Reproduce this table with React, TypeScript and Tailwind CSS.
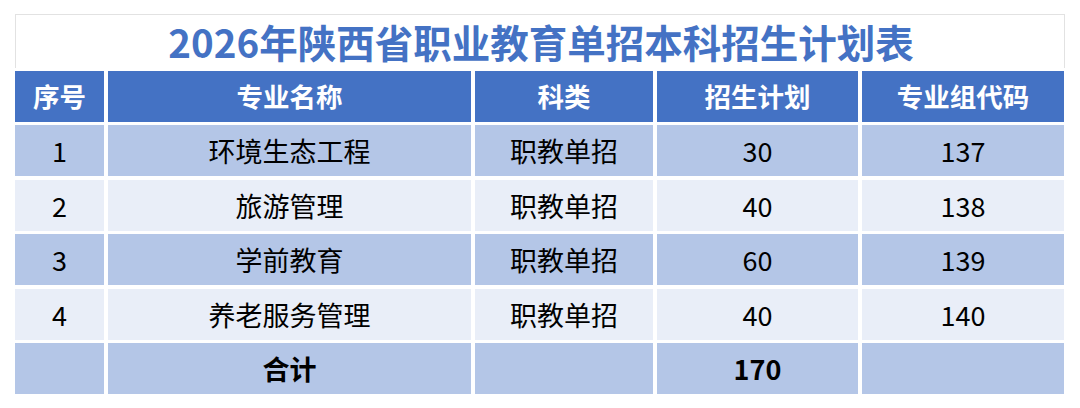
const rows = [
  { no: '1', name: '环境生态工程', type: '职教单招', plan: '30', code: '137' },
  { no: '2', name: '旅游管理', type: '职教单招', plan: '40', code: '138' },
  { no: '3', name: '学前教育', type: '职教单招', plan: '60', code: '139' },
  { no: '4', name: '养老服务管理', type: '职教单招', plan: '40', code: '140' },
]

const headers = ['序号', '专业名称', '科类', '招生计划', '专业组代码']

export default function App() {
  return (
    <div
      className="w-[1080px] h-[408px] bg-white pt-[14px] pl-[15px]"
      style={{ fontFamily: '"Noto Sans CJK SC", "Noto Sans", sans-serif' }}
    >
      {/* Title */}
      <div className="w-[1050px] h-[54px] border-t border-l border-r border-[#e2e2e2] flex items-center justify-center">
        <h1 className="text-[38.5px] font-bold text-[#4472c4] leading-none pl-[2px] -mt-[1px]">
          2026年陕西省职业教育单招本科招生计划表
        </h1>
      </div>

      {/* Table */}
      <div className="mt-[3px] grid grid-cols-[89px_363px_178px_201px_202px] gap-x-[4px] gap-y-[3.4px] auto-rows-[51px] text-[27px] leading-none">
        {headers.map((h) => (
          <div key={h} className="bg-[#4472c4] text-white font-bold text-[26.5px] flex items-center justify-center">
            {h}
          </div>
        ))}

        {rows.map((r, i) => {
          const bg = i % 2 === 0 ? 'bg-[#b4c6e7]' : 'bg-[#e9eef8]'
          return [r.no, r.name, r.type, r.plan, r.code].map((v, j) => (
            <div key={`${i}-${j}`} className={`${bg} text-black flex items-center justify-center`}>
              {v}
            </div>
          ))
        })}

        {/* Total */}
        <div className="bg-[#b4c6e7]" />
        <div className="bg-[#b4c6e7] text-black font-bold flex items-center justify-center">合计</div>
        <div className="bg-[#b4c6e7]" />
        <div className="bg-[#b4c6e7] text-black font-bold flex items-center justify-center">170</div>
        <div className="bg-[#b4c6e7]" />
      </div>
    </div>
  )
}
